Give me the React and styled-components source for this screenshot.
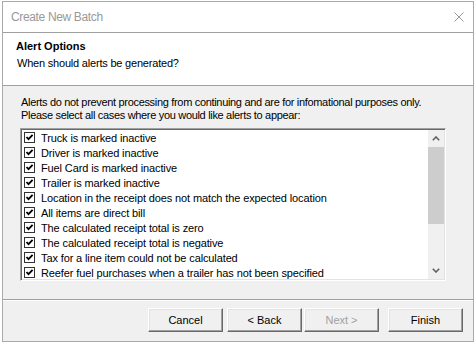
import React from "react";
import styled, { createGlobalStyle } from "styled-components";

const GlobalStyle = createGlobalStyle`
  html, body {
    margin: 0;
    padding: 0;
    background: #ffffff;
  }
  body {
    font-family: "Liberation Sans", Arial, sans-serif;
    font-size: 11px;
    color: #000000;
  }
`;

const alerts = [
  "Truck is marked inactive",
  "Driver is marked inactive",
  "Fuel Card is marked inactive",
  "Trailer is marked inactive",
  "Location in the receipt does not match the expected location",
  "All items are direct bill",
  "The calculated receipt total is zero",
  "The calculated receipt total is negative",
  "Tax for a line item could not be calculated",
  "Reefer fuel purchases when a trailer has not been specified",
];

export default function App() {
  return (
    <>
      <GlobalStyle />
      <Window>
        <TitleBar>
          <span>Create New Batch</span>
          <CloseIcon viewBox="0 0 10 10">
            <path d="M0.5 0.5 L9.5 9.5 M9.5 0.5 L0.5 9.5" />
          </CloseIcon>
        </TitleBar>

        <Header>
          <HeaderTitle>Alert Options</HeaderTitle>
          <HeaderSub>When should alerts be generated?</HeaderSub>
        </Header>

        <Body>
          <Desc>
            Alerts do not prevent processing from continuing and are for
            infomational purposes only.
            <br />
            Please select all cases where you would like alerts to appear:
          </Desc>
          <ListBox>
            <Items>
              {alerts.map((text) => (
                <Row key={text}>
                  <Check>
                    <svg viewBox="0 0 9 9" width="9" height="9">
                      <path d="M1.5 4 L3.5 6.2 L7.6 1.8" />
                    </svg>
                  </Check>
                  <span>{text}</span>
                </Row>
              ))}
            </Items>
            <ScrollBar>
              <Arrow viewBox="0 0 8 5">
                <path d="M0.8 4.2 L4 1 L7.2 4.2" />
              </Arrow>
              <Track>
                <Thumb />
              </Track>
              <Arrow viewBox="0 0 8 5">
                <path d="M0.8 0.8 L4 4 L7.2 0.8" />
              </Arrow>
            </ScrollBar>
          </ListBox>
        </Body>

        <Separator />

        <Footer>
          <Button>Cancel</Button>
          <Button $gap={4}>&lt; Back</Button>
          <Button $gap={2} disabled>
            Next &gt;
          </Button>
          <Button $gap={9}>Finish</Button>
        </Footer>
      </Window>
    </>
  );
}

const Window = styled.div`
  margin: 1px 0 0 2px;
  width: 472px;
  height: 341px;
  box-sizing: border-box;
  border: 1px solid #aaaaaa;
  display: flex;
  flex-direction: column;
  background: #f0f0f0;
`;

const TitleBar = styled.div`
  height: 30px;
  flex: none;
  display: flex;
  align-items: center;
  justify-content: space-between;
  padding: 0 9px 0 8px;
  background: #ffffff;
  border-bottom: 1px solid #a0a0a0;
  font-size: 12px;
  letter-spacing: -0.35px;
  color: #999999;
`;

const CloseIcon = styled.svg`
  width: 10px;
  height: 10px;
  path {
    stroke: #999999;
    stroke-width: 1;
    fill: none;
  }
`;

const Header = styled.div`
  height: 53px;
  flex: none;
  box-sizing: border-box;
  padding: 7px 13px 0;
  background: #ffffff;
  border-bottom: 1px solid #a0a0a0;
  line-height: 13px;
`;

const HeaderTitle = styled.div`
  font-weight: bold;
`;

const HeaderSub = styled.div`
  margin-top: 4px;
  padding-left: 1px;
  letter-spacing: -0.2px;
`;

const Body = styled.div`
  padding: 10px 27px 0 17px;
`;

const Desc = styled.div`
  line-height: 13px;
  padding-left: 1px;
  white-space: nowrap;
  letter-spacing: -0.32px;
`;

const ListBox = styled.div`
  margin-top: 6px;
  height: 153px;
  box-sizing: border-box;
  display: flex;
  background: #ffffff;
  border-style: solid;
  border-width: 1px;
  border-color: #a0a0a0 #ffffff #ffffff #a0a0a0;
  box-shadow: inset 1px 1px 0 #696969, inset -1px -1px 0 #e3e3e3;
  padding: 1px;
`;

const Items = styled.div`
  flex: 1;
  padding: 0 0 0 2px;
  overflow: hidden;
`;

const Row = styled.div`
  height: 15px;
  display: flex;
  align-items: center;
  gap: 6px;
  white-space: nowrap;
  letter-spacing: -0.12px;
`;

const Check = styled.span`
  width: 11px;
  height: 11px;
  box-sizing: border-box;
  flex: none;
  border: 1px solid #333333;
  background: #ffffff;
  display: flex;
  align-items: center;
  justify-content: center;
  path {
    fill: none;
    stroke: #000000;
    stroke-width: 1.8;
  }
`;

const ScrollBar = styled.div`
  width: 16px;
  flex: none;
  display: flex;
  flex-direction: column;
  align-items: center;
  background: #f0f0f0;
`;

const Arrow = styled.svg`
  width: 8px;
  height: 5px;
  margin: 6px 0;
  flex: none;
  path {
    fill: none;
    stroke: #606060;
    stroke-width: 1.6;
  }
`;

const Track = styled.div`
  flex: 1;
  align-self: stretch;
`;

const Thumb = styled.div`
  height: 77px;
  background: #cdcdcd;
`;

const Separator = styled.div`
  margin-top: 18px;
  border-top: 1px solid #a0a0a0;
  border-bottom: 1px solid #ffffff;
`;

const Footer = styled.div`
  display: flex;
  justify-content: flex-end;
  padding: 7px 10px 0;
`;

const Button = styled.button`
  width: 75px;
  height: 24px;
  margin-left: ${(p) => p.$gap || 0}px;
  box-sizing: border-box;
  font-family: "Liberation Sans", Arial, sans-serif;
  font-size: 11px;
  color: #000000;
  background: #f0f0f0;
  border-style: solid;
  border-width: 1px;
  border-color: #ffffff #696969 #696969 #ffffff;
  box-shadow: inset -1px -1px 0 #a0a0a0, inset 1px 1px 0 #e3e3e3;
  padding: 0;
  &:disabled {
    color: #a0a0a0;
  }
`;
